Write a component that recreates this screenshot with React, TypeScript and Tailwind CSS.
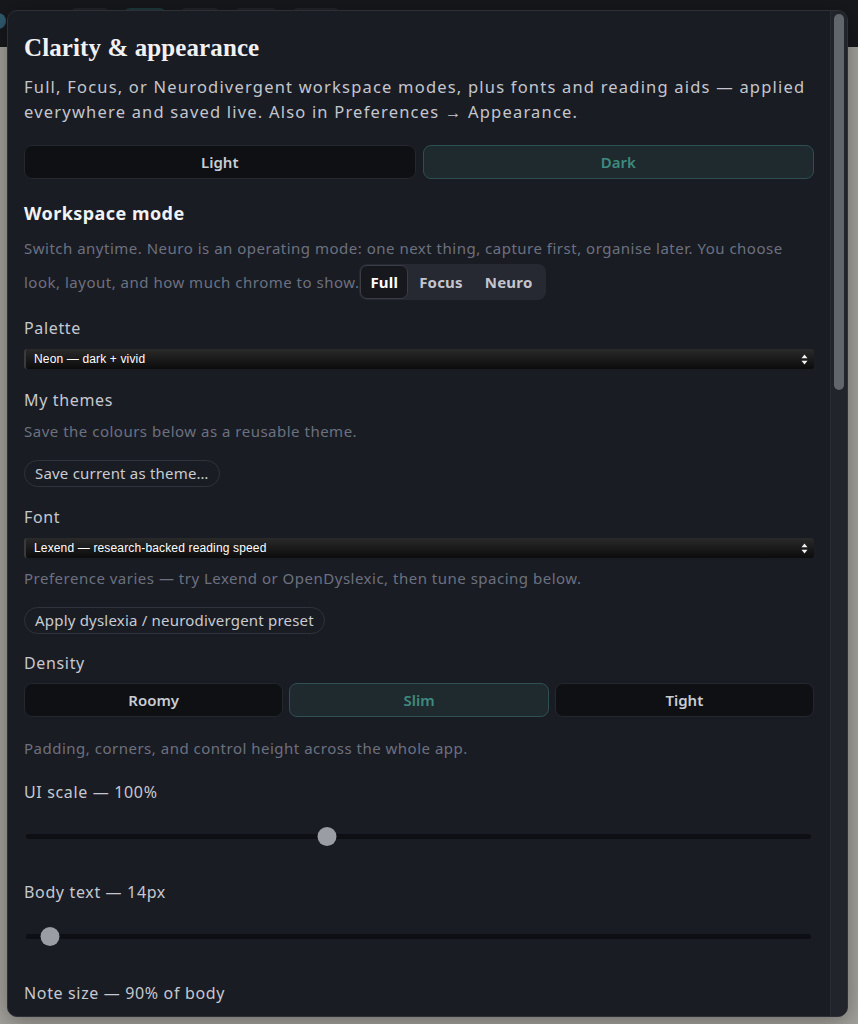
const sans = "font-['Noto_Sans',sans-serif]"

function NativeSelect({ value }: { value: string }) {
  return (
    <div className="relative flex h-[20px] items-center rounded-[3px] border-l-2 border-[#3a3a3a] bg-gradient-to-b from-[#2a2a2b] to-[#0c0c0d] pl-[8px] pr-[6px] text-[12px] text-white">
      <span className="flex-1 font-['Liberation_Sans',sans-serif] tracking-[0.15px]">{value}</span>
      <svg width="7" height="11" viewBox="0 0 7 11" fill="#f2f2f2">
        <path d="M3.5 0.5 L6.5 4.2 L0.5 4.2 Z" />
        <path d="M3.5 10.5 L6.5 6.8 L0.5 6.8 Z" />
      </svg>
    </div>
  )
}

function Slider({ pos }: { pos: number }) {
  return (
    <div className="relative ml-[2px] mr-[3px] flex h-[20px] items-center">
      <div className="h-[5px] w-full rounded-full bg-[#0e0f14]" />
      <div
        className="absolute top-[1px] h-[19px] w-[19px] -translate-x-1/2 rounded-full bg-[#9b9da4]"
        style={{ left: `${pos}%` }}
      />
    </div>
  )
}

const label = 'text-[16px] leading-[22px] tracking-[0.65px] text-[#c5c8d0]'
const hint = 'text-[15px] leading-[22px] tracking-[0.5px] text-[#6c7180]'
const pill = 'h-[27px] rounded-full border border-[#30333b] px-[10px] text-[15px] tracking-[0.2px] text-[#c8cbd2]'
const plainBtn = 'h-[34px] rounded-[8px] border border-[#25272e] bg-[#0f1014] text-[15px] font-semibold text-[#c9ccd3]'
const activeBtn = 'h-[34px] rounded-[8px] border border-[#2e5052] bg-[#1e2a2e] text-[15px] font-semibold text-[#3e8a7f]'

export default function App() {
  return (
    <div className={`relative h-[1024px] w-[858px] overflow-hidden bg-[#a3a19b] ${sans}`}>
      {/* app header behind the dialog */}
      <div className="flex h-[47px] items-start gap-[14px] bg-[#17181c] pl-[70px] pt-[8px]">
        <div className="h-[12px] w-[40px] rounded-full bg-[#22242a]" />
        <div className="h-[12px] w-[42px] rounded-full bg-[#1f3a3d]" />
        <div className="h-[12px] w-[40px] rounded-full bg-[#22242a]" />
        <div className="h-[12px] w-[44px] rounded-full bg-[#22242a]" />
        <div className="h-[12px] w-[48px] rounded-full bg-[#22242a]" />
      </div>
      <div className="absolute left-[-10px] top-[13px] h-[16px] w-[16px] rounded-full bg-[#2f5a6e]" />

      {/* dialog */}
      <div className="absolute left-[7px] top-[10px] flex h-[1007px] w-[841px] overflow-hidden rounded-[10px] border border-[#2e3037] bg-[#1a1c23] shadow-[0_4px_24px_rgba(0,0,0,0.35)]">
        <div className="flex-1 px-[16px] pt-[22px]">
          <h1 className="font-['Liberation_Serif',serif] text-[25px] font-bold leading-[30px] tracking-[0.1px] text-[#f1f1f3]">
            Clarity &amp; appearance
          </h1>
          <p className="mt-[11px] text-[16.5px] leading-[25px] tracking-[1.2px] text-[#c3c6ce]">
            Full, Focus, or Neurodivergent workspace modes, plus fonts and reading aids — applied everywhere and saved live. Also in Preferences → Appearance.
          </p>

          <div className="mt-[21px] grid grid-cols-2 gap-[7px]">
            <button className={plainBtn}>Light</button>
            <button className={activeBtn}>Dark</button>
          </div>

          <h2 className="mt-[22px] text-[18px] font-bold leading-[24px] tracking-[0.45px] text-[#f1f2f4]">Workspace mode</h2>
          <div className="mt-[7px] text-[15px] leading-[32px] tracking-[0.5px] text-[#6c7180]">
            <span>
              Switch anytime. Neuro is an operating mode: one next thing, capture first, organise later. You choose look, layout, and how much chrome to show.
            </span>
            <span className="inline-flex h-[36px] items-center rounded-[8px] bg-[#262931] p-[1px] leading-none tracking-[0.2px]">
              <span className="flex h-[34px] items-center rounded-[7px] border border-[#3a3d46] bg-[#16181e] px-[9px] text-[15px] font-bold text-white">
                Full
              </span>
              <span className="px-[11px] text-[15px] font-bold text-[#c3c6ce]">Focus</span>
              <span className="pl-[11px] pr-[12px] text-[15px] font-bold text-[#c3c6ce]">Neuro</span>
            </span>
          </div>

          <div className={`mt-[17px] ${label}`}>Palette</div>
          <div className="mt-[10px]">
            <NativeSelect value="Neon — dark + vivid" />
          </div>

          <div className={`mt-[20px] ${label}`}>My themes</div>
          <div className={`mt-[9px] ${hint}`}>Save the colours below as a reusable theme.</div>
          <button className={`mt-[18px] ${pill}`}>Save current as theme…</button>

          <div className={`mt-[19px] ${label}`}>Font</div>
          <div className="mt-[10px]">
            <NativeSelect value="Lexend — research-backed reading speed" />
          </div>
          <div className={`mt-[9px] ${hint}`}>
            Preference varies — try Lexend or OpenDyslexic, then tune spacing below.
          </div>
          <button className={`mt-[18px] ${pill}`}>Apply dyslexia / neurodivergent preset</button>

          <div className={`mt-[18px] ${label}`}>Density</div>
          <div className="mt-[9px] grid grid-cols-3 gap-[6px]">
            <button className={plainBtn}>Roomy</button>
            <button className={activeBtn}>Slim</button>
            <button className={plainBtn}>Tight</button>
          </div>
          <div className={`mt-[20px] ${hint}`}>Padding, corners, and control height across the whole app.</div>

          <div className={`mt-[22px] ${label}`}>UI scale — 100%</div>
          <div className="mt-[23px]">
            <Slider pos={38.3} />
          </div>

          <div className={`mt-[35px] ${label}`}>Body text — 14px</div>
          <div className="mt-[23px]">
            <Slider pos={3.1} />
          </div>

          <div className={`mt-[36px] ${label}`}>Note size — 90% of body</div>
        </div>

        {/* scrollbar */}
        <div className="w-[17px] border-l border-[#2a2c33] bg-[#22242b] px-[3px] pt-[3px]">
          <div className="h-[376px] rounded-full bg-[#61666d]" />
        </div>
      </div>
    </div>
  )
}
